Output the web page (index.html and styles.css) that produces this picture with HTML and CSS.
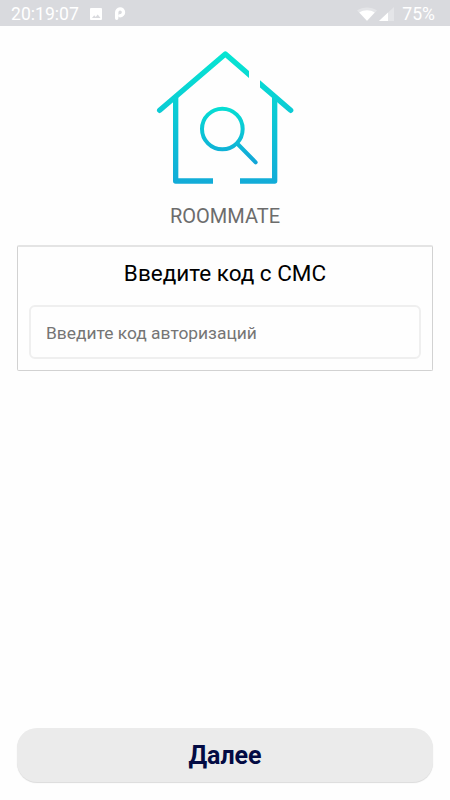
FILE: index.html
```html
<!DOCTYPE html>
<html lang="ru">
<head>
    <meta charset="UTF-8">
    <meta name="viewport" content="width=device-width, initial-scale=1.0">
    <title>Roommate</title>
    <link rel="stylesheet" href="styles.css">
</head>
<body>

    <div class="screen">
        <!-- Status bar -->
        <header class="status-bar">
            <span class="status-time">20:19:07</span>
            <svg class="icon-image" width="14" height="14" viewBox="0 0 14 14">
                <path fill="#fff" fill-rule="evenodd" d="M2 1h10q1 0 1 1v10q0 1-1 1H2q-1 0-1-1V2q0-1 1-1zM3 11h8.500L8.700 7.500l-2 2.400-1.500-1.700z"/>
            </svg>
            <svg class="icon-app" width="12" height="14" viewBox="0 0 12 14">
                <path fill="none" stroke="#fff" stroke-width="3.4" stroke-linecap="round" d="M2.700 11.300V5.500a3.400 3.400 0 1 1 3.400 3.200"/>
            </svg>
            <svg class="icon-wifi" width="20" height="14" viewBox="0 0 20 14">
                <path fill="#fff" fill-opacity="0.3" d="M0 3.500C5.500-.6 14.500-.6 20 3.500L10 14z"/>
                <path fill="#fff" d="M2.300 5.600c4.700-3.100 10.700-3.100 15.400 0L10 13.800z"/>
            </svg>
            <svg class="icon-signal" width="15" height="14" viewBox="0 0 15 14">
                <path fill="#fff" fill-opacity="0.3" d="M0 14L15 0v14z"/>
                <path fill="#fff" d="M0 14L9 5.600V14z"/>
            </svg>
            <span class="status-battery">75%</span>
        </header>

        <main class="content">
            <svg class="logo" width="160" height="155" viewBox="0 0 480 465">
                <defs>
                    <linearGradient id="house-gradient" gradientUnits="userSpaceOnUse" x1="0" y1="34" x2="0" y2="432">
                        <stop offset="0" stop-color="#06e6d2"/>
                        <stop offset="1" stop-color="#12abd8"/>
                    </linearGradient>
                    <linearGradient id="search-gradient" gradientUnits="userSpaceOnUse" x1="0" y1="200" x2="0" y2="372">
                        <stop offset="0" stop-color="#06dfd3"/>
                        <stop offset="1" stop-color="#12a4d8"/>
                    </linearGradient>
                    <clipPath id="roof-gap">
                        <path d="M0 0h312v465H0zM345 0h135v465H345z"/>
                    </clipPath>
                </defs>
                <g fill="none" stroke="url(#house-gradient)" stroke-width="16" stroke-linejoin="round">
                    <path d="M44 211L241 42l196 169" stroke-linecap="round" clip-path="url(#roof-gap)"/>
                    <path d="M92 172v251h112M285 423h104V172"/>
                </g>
                <g fill="none" stroke="url(#search-gradient)" stroke-linecap="round">
                    <circle cx="232" cy="267" r="61" stroke-width="12"/>
                    <path d="M278 312l54 55" stroke-width="12"/>
                </g>
            </svg>
            <h1 class="brand">ROOMMATE</h1>

            <form class="code-card">
                <h2 class="code-title">Введите код с СМС</h2>
                <input class="code-input" type="text" placeholder="Введите код авторизаций">
            </form>
        </main>

        <footer class="actions">
            <button class="next-button" type="button">Далее</button>
        </footer>
    </div>

</body>
</html>
```

FILE: styles.css
```css
* {
    box-sizing: border-box;
}

body {
    font-family: Roboto, sans-serif;
    background: #fefefe;
    margin: 0;
}

.screen {
    display: flex;
    flex-direction: column;
    height: 100vh;
    overflow: hidden;
}

/* Status bar */
.status-bar {
    display: flex;
    align-items: center;
    height: 26px;
    padding: 2px 15px 0 11px;
    background: #d9dade;
    color: #fff;
    font-size: 17.6px;
    line-height: 24px;
}

.icon-image {
    margin-left: 10px;
}

.icon-app {
    margin-left: 11px;
}

.icon-wifi {
    margin-left: auto;
}

.icon-signal {
    margin-left: 2px;
}

.status-battery {
    margin-left: 8px;
}

/* Content */
.content {
    flex: 1;
    display: flex;
    flex-direction: column;
    align-items: center;
    padding: 14px 17px 0;
}

.logo {
    flex-shrink: 0;
}

.brand {
    margin: 9px 0 0;
    color: #6c6c6c;
    font-size: 20px;
    font-weight: 400;
    line-height: 24px;
}

.code-card {
    width: 100%;
    height: 126px;
    margin-top: 17px;
    padding: 12px 11px 0;
    border: 1px solid #d2d2d2;
    border-top: 2px solid #e4e4e4;
    border-radius: 2px;
    text-align: center;
}

.code-title {
    margin: 0 0 18px;
    color: #000;
    font-size: 22.5px;
    font-weight: 400;
    line-height: 28px;
}

.code-input {
    display: block;
    width: 100%;
    height: 54px;
    padding: 1px 15px 0;
    border: 2px solid #efefef;
    border-radius: 6px;
    background: #fefefe;
    font-family: inherit;
    font-size: 17.4px;
}

.code-input::placeholder {
    color: #757575;
    opacity: 1;
}

/* Bottom button */
.actions {
    padding: 0 17px 18px;
}

.next-button {
    display: block;
    width: 100%;
    height: 54px;
    border: none;
    border-radius: 20px;
    background: #ebebeb;
    box-shadow: 0 1px 1px rgba(0, 0, 0, 0.14);
    color: #030b43;
    font-family: inherit;
    font-size: 25px;
    font-weight: 700;
}
```
